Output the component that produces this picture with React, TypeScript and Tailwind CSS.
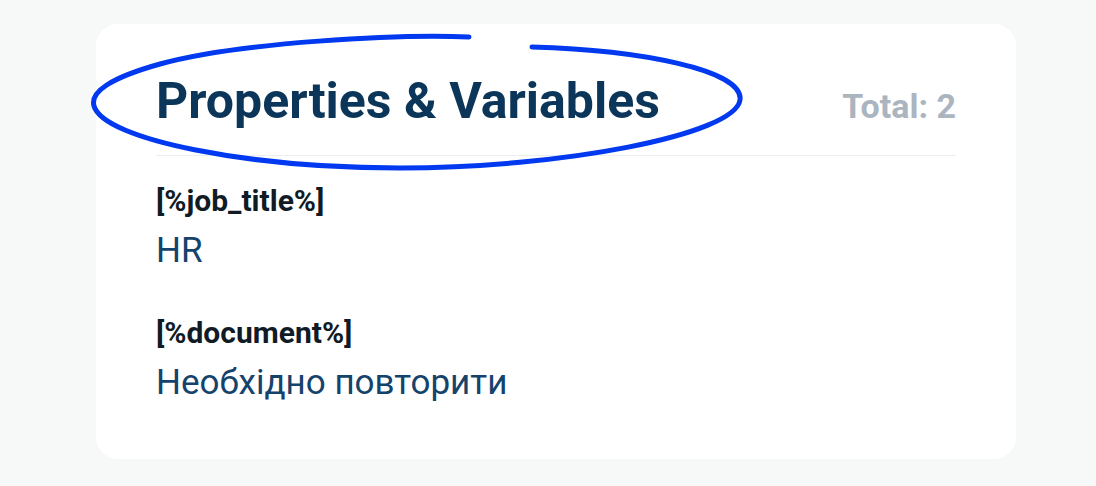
const font = { fontFamily: "Roboto, 'Noto Sans', sans-serif" }

const vars = [
    { key: "[%job_title%]", value: "HR" },
    { key: "[%document%]", value: "Необхідно повторити" },
]

const App = () => {
    return (
        <div className="relative min-h-screen w-full bg-[#f7f9f9] pl-[96px] pt-[24px]" style={font}>

            <div className="w-[920px] h-[435px] rounded-[22px] bg-white px-[60px] pt-[52px]">

                {/* // header ----> */}
                <div className="flex items-baseline justify-between border-b border-[#eceef0] pb-[29px]">
                    <h2 className="text-[50px] leading-[50px] font-bold text-[#0c3659]">Properties &amp; Variables</h2>
                    <p className="text-[34px] leading-[34px] font-bold text-[#abb5bf]">Total: {vars.length}</p>
                </div>

                <div className="flex flex-col pt-[28px] gap-[44px]">
                    {
                        vars.map((item, i) => {
                            return (
                                <div key={i} className="flex flex-col gap-[12px]">
                                    <p className="text-[30px] leading-[34px] font-bold text-[#111b26]">{item.key}</p>
                                    <p className="text-[35px] leading-[42px] text-[#15436b]">{item.value}</p>
                                </div>
                            )
                        })
                    }
                </div>
            </div>

            {/* // hand drawn circle round the title */}
            <svg className="absolute left-0 top-0 w-[1096px] h-[486px] pointer-events-none" viewBox="0 0 1096 486" fill="none">
                <path
                    d="M469 37 C400 34 240 42 160 64 C110 78 90 92 94 106 C104 140 250 168 400 168 C560 168 735 135 740 100 C744 70 640 50 532 47"
                    stroke="#0039f0"
                    strokeWidth="5"
                    strokeLinecap="round"
                />
            </svg>
        </div>
    )
}

export default App
